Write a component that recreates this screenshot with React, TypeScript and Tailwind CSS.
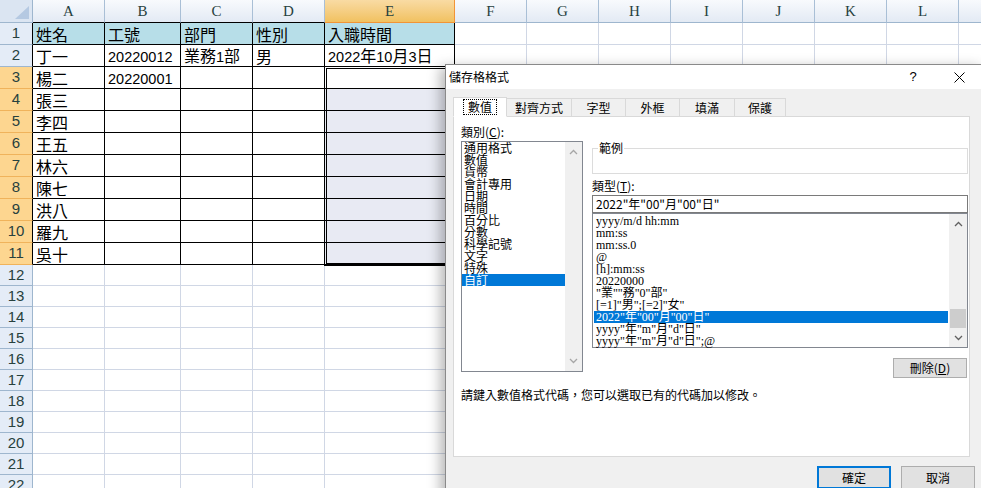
import React from "react";

const COLS = ["A", "B", "C", "D", "E", "F", "G", "H", "I", "J", "K", "L", ""];

const DATA: Record<number, string[]> = {
  1: ["姓名", "工號", "部門", "性別", "入職時間"],
  2: ["丁一", "20220012", "業務1部", "男", "2022年10月3日"],
  3: ["楊二", "20220001"],
  4: ["張三"],
  5: ["李四"],
  6: ["王五"],
  7: ["林六"],
  8: ["陳七"],
  9: ["洪八"],
  10: ["羅九"],
  11: ["吳十"],
};

const CATEGORIES = ["通用格式", "數值", "貨幣", "會計專用", "日期", "時間", "百分比", "分數", "科學記號", "文字", "特殊", "自訂"];

const FORMATS = [
  "yyyy/m/d hh:mm",
  "mm:ss",
  "mm:ss.0",
  "@",
  "[h]:mm:ss",
  "20220000",
  "\"業\"\"務\"0\"部\"",
  "[=1]\"男\";[=2]\"女\"",
  "2022\"年\"00\"月\"00\"日\"",
  "yyyy\"年\"m\"月\"d\"日\"",
  "yyyy\"年\"m\"月\"d\"日\";@",
];

const TABS = [
  { t: "數值", w: "w-[54px]" },
  { t: "對齊方式", w: "w-[65px]" },
  { t: "字型", w: "w-[54px]" },
  { t: "外框", w: "w-[54px]" },
  { t: "填滿", w: "w-[55px]" },
  { t: "保護", w: "w-[51px]" },
];

const Chevron = ({ up, color }: { up?: boolean; color: string }) => (
  <svg width="9" height="6" viewBox="0 0 9 6">
    <path d={up ? "M1 5 L4.5 1.5 L8 5" : "M1 1 L4.5 4.5 L8 1"} fill="none" stroke={color} strokeWidth="1.3" />
  </svg>
);

// digits in the sheet are narrower than the CJK font's latin, so split runs
const CellText = ({ text }: { text: string }) => (
  <>
    {text.split(/([0-9]+)/).map((part, i) =>
      /^[0-9]+$/.test(part) ? (
        <span key={i} className="font-['Liberation_Sans',sans-serif] text-[14.5px]">
          {part}
        </span>
      ) : (
        <span key={i}>{part}</span>
      )
    )}
  </>
);

function headerCell(i: number) {
  if (i === 4) return "bg-linear-to-b from-[#f9dba3] to-[#f1c15f] border-r border-b border-[#f29436]";
  if (i <= 3) return "bg-linear-to-b from-[#f8fafd] to-[#e3eaf4] border-r border-r-[#a9bfd6] border-b border-b-black";
  return "bg-linear-to-b from-[#f8fafd] to-[#e3eaf4] border-r border-r-[#a9bfd6] border-b border-b-[#9eb6ce]";
}

function rowHead(r: number) {
  const h = r <= 11 ? "h-[22px]" : "h-[21px]";
  const right = r <= 11 ? "border-r-black" : "border-r-[#9eb6ce]";
  const bg = r >= 3 && r <= 11 ? "bg-[#fdd690] border-b-[#f0b35b]" : "bg-[#e4ecf7] border-b-[#9eb6ce]";
  return `${h} ${bg} border-r border-b ${right} flex items-center justify-center`;
}

function cell(r: number, c: number) {
  const h = r <= 11 ? "h-[22px]" : "h-[21px]";
  const line = r <= 11 && c <= 4 ? "border-black" : "border-[#d0d7e5]";
  let bg = "bg-white";
  if (r === 1 && c <= 4) bg = "bg-[#b7dee8]";
  if (c === 4 && r >= 4 && r <= 11) bg = "bg-[#e8eaf3]";
  return `${h} ${line} ${bg} border-r border-b pl-[3px] flex items-center whitespace-nowrap`;
}

export default function App() {
  const rows = Array.from({ length: 22 }, (_, i) => i + 1);
  return (
    <div className="relative w-[981px] h-[488px] overflow-hidden bg-white">
      <div className="grid grid-cols-[33px_72px_76px_72px_72px_130px_72px_72px_72px_72px_72px_72px_72px_72px] font-['Noto_Sans_CJK_TC',sans-serif] text-[16px] text-black">
        <div className="h-[23px] bg-[#dbe5f2] border-r border-b border-[#9eb6ce] flex items-end justify-end p-[3px]">
          <svg width="14" height="13" viewBox="0 0 14 13">
            <polygon points="14,0 14,13 0,13" fill="#b5c9e2" />
          </svg>
        </div>
        {COLS.map((c, i) => (
          <div
            key={i}
            className={`h-[23px] flex items-center justify-center font-['Liberation_Serif',serif] text-[15px] text-[#27413e] ${headerCell(i)}`}
          >
            {c}
          </div>
        ))}
        {rows.map((r) => (
          <React.Fragment key={r}>
            <div className={`${rowHead(r)} font-['Liberation_Sans',sans-serif] text-[15px] text-[#27413e]`}>{r}</div>
            {COLS.map((c, i) => (
              <div key={i} className={cell(r, i)}>
                <span className="leading-[20px]">
                  <CellText text={DATA[r]?.[i] ?? ""} />
                </span>
              </div>
            ))}
          </React.Fragment>
        ))}
      </div>

      {/* active range E3:E11 */}
      <div className="absolute left-[324px] top-[66px] w-[132px] h-[200px] border-[3px] border-double border-black" />

      {/* dialog */}
      <div className="absolute left-[445px] top-[64px] w-[540px] h-[440px] bg-[#f0f0f0] border border-[#8a8a8a] shadow-[-5px_3px_12px_rgba(0,0,0,0.28)] font-['Noto_Sans_CJK_TC',sans-serif] text-[12px] text-black">
        <div className="h-[24px] bg-white flex items-center">
          <span className="pl-[3px] leading-[14px]">儲存格格式</span>
          <span className="ml-auto w-[46px] text-center text-[13px] font-['Liberation_Sans',sans-serif]">?</span>
          <span className="w-[46px] flex justify-center mr-[2px]">
            <svg width="11" height="11" viewBox="0 0 11 11">
              <path d="M0.5 0.5 L10.5 10.5 M10.5 0.5 L0.5 10.5" stroke="#000" strokeWidth="1" />
            </svg>
          </span>
        </div>

        <div className="flex items-end ml-[7px] mt-[7px] h-[20px]">
          {TABS.map((t, i) =>
            i === 0 ? (
              <div key={t.t} className={`${t.w} relative z-10 h-[20px] -mb-px bg-white border border-[#d9d9d9] border-b-white flex items-center justify-center`}>
                <span className="border border-dotted border-black px-[4px] leading-[14px]">{t.t}</span>
              </div>
            ) : (
              <div key={t.t} className={`${t.w} h-[18px] bg-[#f0f0f0] border border-l-0 border-b-0 border-[#d9d9d9] flex items-center justify-center leading-[14px]`}>
                {t.t}
              </div>
            )
          )}
        </div>

        <div className="ml-[7px] w-[517px] h-[341px] bg-white border border-[#d9d9d9] pl-[7px] pt-[8px]">
          <div className="flex">
            <div className="w-[122px]">
              <div className="leading-[14px]">
                類別(<u>C</u>):
              </div>
              <div className="mt-[2px] h-[231px] border border-[#828790] flex">
                <div className="flex-1">
                  {CATEGORIES.map((c, i) => (
                    <div
                      key={c}
                      className={`h-[12px] leading-[12px] pl-[2px] whitespace-nowrap ${i === 11 ? "bg-[#0078d7] text-white" : ""}`}
                    >
                      {c}
                    </div>
                  ))}
                </div>
                <div className="w-[17px] bg-[#f0f0f0] flex flex-col justify-between">
                  <div className="h-[20px] flex items-center justify-center">
                    <Chevron up color="#a6a6a6" />
                  </div>
                  <div className="h-[20px] flex items-center justify-center">
                    <Chevron color="#a6a6a6" />
                  </div>
                </div>
              </div>
            </div>

            <div className="ml-[9px] w-[376px] flex flex-col">
              <div className="relative mt-[23px] h-[26px] border border-[#dcdcdc]">
                <span className="absolute -top-[8px] left-[5px] bg-white px-[1px] leading-[14px]">範例</span>
              </div>
              <div className="mt-[5px] leading-[14px]">
                類型(<u>T</u>):
              </div>
              <div className="mt-[2px] h-[18px] border border-[#7a7a7a] pl-[3px] leading-[16px] whitespace-nowrap">
                2022"年"00"月"00"日"
              </div>
              <div className="h-[135px] border border-[#828790] flex">
                <div className="flex-1 p-[1px] font-['Liberation_Serif','Noto_Sans_CJK_TC',serif]">
                  {FORMATS.map((f, i) => (
                    <div
                      key={f}
                      className={`h-[12px] leading-[12px] pl-[2px] whitespace-nowrap ${i === 8 ? "bg-[#0078d7] text-white" : ""}`}
                    >
                      {f}
                    </div>
                  ))}
                </div>
                <div className="w-[18px] bg-[#f0f0f0] flex flex-col">
                  <div className="h-[20px] flex items-center justify-center">
                    <Chevron up color="#606060" />
                  </div>
                  <div className="flex-1">
                    <div className="mt-[76px] mx-[1px] h-[19px] bg-[#cdcdcd]" />
                  </div>
                  <div className="h-[20px] flex items-center justify-center">
                    <Chevron color="#606060" />
                  </div>
                </div>
              </div>
              <div className="mt-[10px] self-end mr-[1px] w-[74px] h-[20px] bg-[#e1e1e1] border border-[#adadad] flex items-center justify-center leading-[14px]">
                刪除(<u>D</u>)
              </div>
            </div>
          </div>
          <div className="mt-[10px] leading-[14px] whitespace-nowrap">請鍵入數值格式代碼，您可以選取已有的代碼加以修改。</div>
        </div>

        <div className="flex justify-end gap-[10px] pr-[9px] mt-[9px]">
          <div className="w-[74px] h-[23px] bg-[#e1e1e1] border-2 border-[#0078d7] flex items-center justify-center">確定</div>
          <div className="w-[74px] h-[23px] bg-[#e1e1e1] border border-[#adadad] flex items-center justify-center">取消</div>
        </div>
      </div>
    </div>
  );
}
